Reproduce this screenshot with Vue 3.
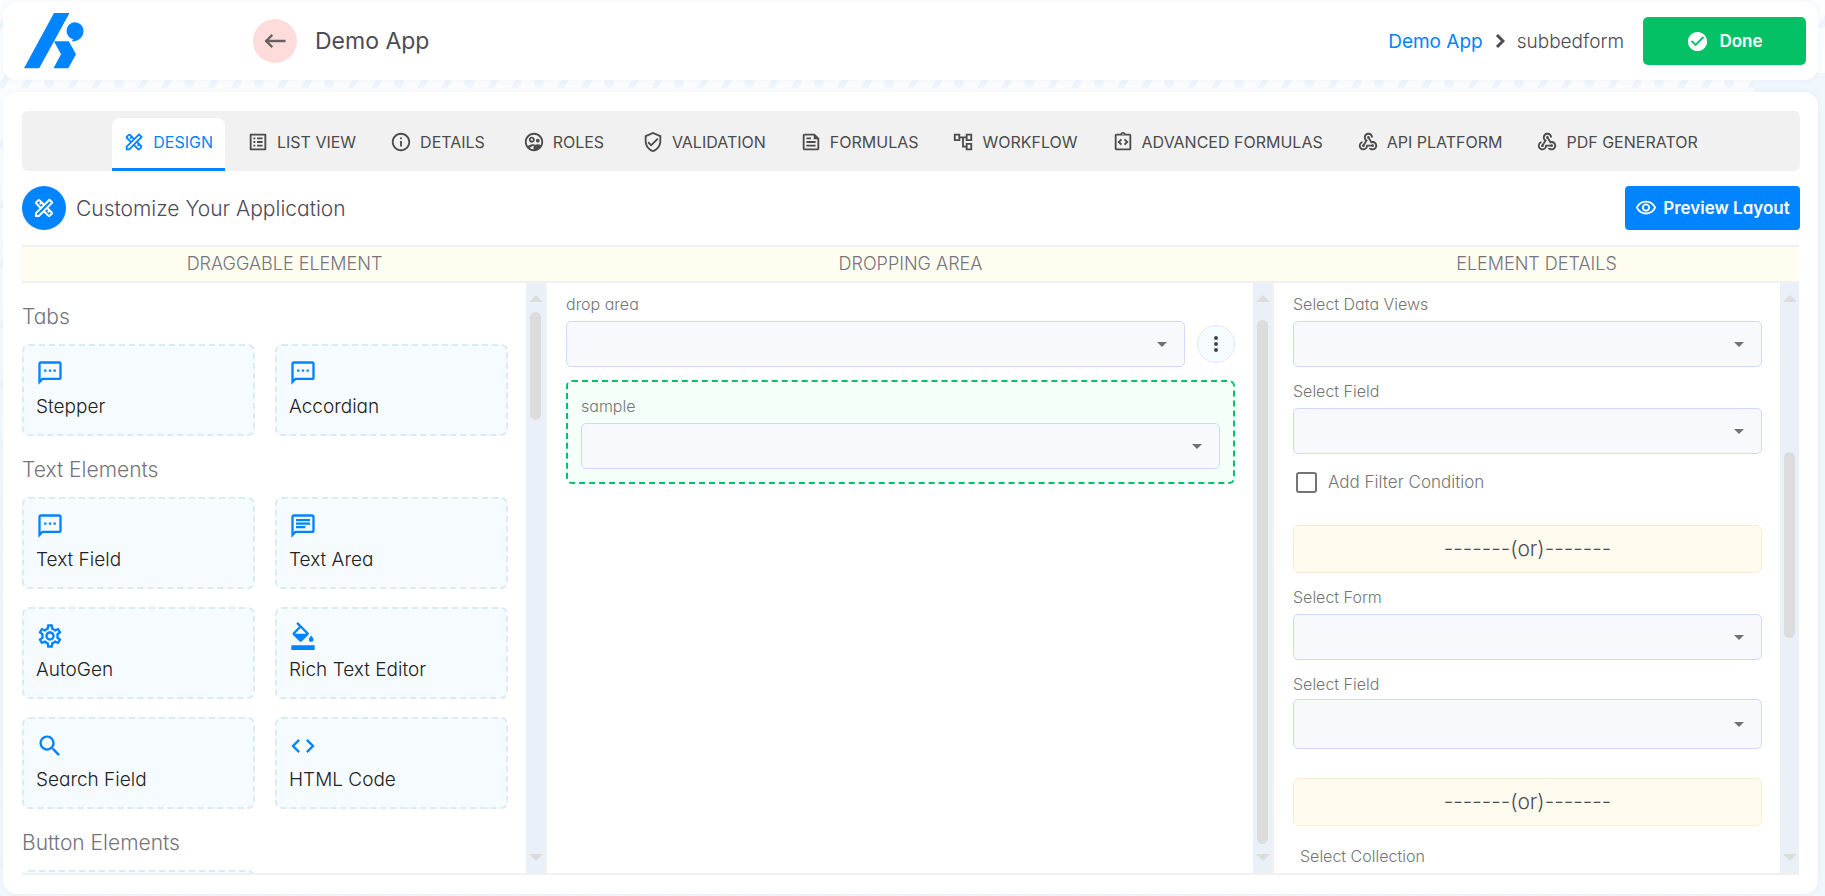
<script setup>
import { ref } from 'vue'

const icons = {
  design: 'M20.97 7.27c.39-.39.39-1.02 0-1.41l-2.83-2.83c-.39-.39-1.02-.39-1.41 0l-4.49 4.49-3.89-3.89c-.78-.78-2.05-.78-2.83 0l-1.9 1.9c-.78.78-.78 2.05 0 2.83l3.89 3.89L3 16.76V21h4.24l4.52-4.52 3.89 3.89c.95.95 2.23.6 2.83 0l1.9-1.9c.78-.78.78-2.05 0-2.83l-3.89-3.89 4.48-4.48zM5.04 6.94l1.89-1.9L8.2 6.31 7.02 7.5l1.41 1.41 1.19-1.19 1.2 1.2-1.9 1.9-3.88-3.88zm11.23 7.44l-1.19 1.19 1.41 1.41 1.19-1.19 1.27 1.27-1.9 1.9-3.89-3.89 1.9-1.9 1.21 1.21zM6.41 19H5v-1.41l9.61-9.61 1.3 1.3.11.11L6.41 19zm9.61-9.61l-1.41-1.41 2.83-2.83 1.41 1.41-2.83 2.83z',
  list: 'M19 5v14H5V5h14m1.1-2H3.9c-.5 0-.9.4-.9.9v16.2c0 .4.4.9.9.9h16.2c.4 0 .9-.5.9-.9V3.9c0-.5-.5-.9-.9-.9zM11 7h6v2h-6V7zm0 4h6v2h-6v-2zm0 4h6v2h-6zM7 7h2v2H7zm0 4h2v2H7zm0 4h2v2H7z',
  info: 'M11 7h2v2h-2zm0 4h2v6h-2zm1-9C6.48 2 2 6.48 2 12s4.48 10 10 10 10-4.48 10-10S17.52 2 12 2zm0 18c-4.41 0-8-3.59-8-8s3.59-8 8-8 8 3.59 8 8-3.59 8-8 8z',
  roles: 'M12 2C6.48 2 2 6.48 2 12s4.48 10 10 10 10-4.48 10-10S17.52 2 12 2zM5.3 16.3C4.500 15 4 13.600 4 12c0-4.420 3.580-8 8-8s8 3.580 8 8c0 1.200-.270 2.340-.750 3.370-1-.590-2.360-.870-3.240-.870-1.520 0-4.500.810-4.500 2.700v2.780c-1.500-.100-2.900-.600-4.100-1.500.600-1.200 2.300-1.900 4.100-2.200.300-.600 1-1.300 1.700-1.700-.700-.080-1.300-.150-2-.150-1.700 0-4.200.500-5.910 1.870zM9.610 12.750c1.790 0 3.250-1.460 3.250-3.250s-1.460-3.250-3.250-3.250S6.360 7.710 6.360 9.500s1.460 3.250 3.250 3.250zm0-4.500c.690 0 1.250.560 1.250 1.250s-.560 1.250-1.250 1.250-1.250-.560-1.250-1.250.560-1.250 1.250-1.250zM16.110 12.500c1.110 0 2-.890 2-2s-.890-2-2-2c-1.110 0-2.010.890-2 2 0 1.110.890 2 2 2z',
  shield: 'M12 1L3 5v6c0 5.55 3.84 10.74 9 12 5.16-1.26 9-6.45 9-12V5l-9-4zm7 10c0 4.52-2.98 8.69-7 9.93-4.02-1.24-7-5.41-7-9.93V6.3l7-3.11 7 3.11V11zm-11.59.59L6 13l4 4 8-8-1.41-1.42L10 14.17z',
  feed: 'M16 3H5c-1.1 0-2 .9-2 2v14c0 1.1.9 2 2 2h14c1.1 0 2-.9 2-2V8l-5-5zm3 16H5V5h10v4h4v10zM7 17h10v-2H7v2zm5-10H7v2h5V7zm-5 6h10v-2H7v2z',
  tree: 'M22 11V3h-7v3H9V3H2v8h7V8h2v10h4v3h7v-8h-7v3h-2V8h2v3h7zM7 9H4V5h3v4zm10 6h3v4h-3v-4zm0-10h3v4h-3V5z',
  clip: 'M11 14.17 8.83 12 11 9.83 9.59 8.41 6 12l3.59 3.59zM14.41 15.59 18 12l-3.59-3.59L13 9.83 15.17 12 13 14.17zM19 3h-4.18C14.4 1.84 13.3 1 12 1s-2.4.84-2.82 2H5c-1.1 0-2 .9-2 2v14c0 1.1.9 2 2 2h14c1.1 0 2-.9 2-2V5c0-1.1-.9-2-2-2zm-7-.25c.41 0 .75.34.75.75s-.34.75-.75.75-.75-.34-.75-.75.34-.75.75-.75zM19 19H5V5h14v14z',
  hook: 'M10 15h5.88c.27-.31.67-.5 1.12-.5.83 0 1.5.67 1.5 1.5s-.67 1.5-1.5 1.5c-.44 0-.84-.19-1.12-.5H11.9c-.46 2.28-2.48 4-4.9 4-2.76 0-5-2.24-5-5 0-2.42 1.72-4.44 4-4.9v2.07c-1.16.41-2 1.53-2 2.83 0 1.65 1.35 3 3 3s3-1.35 3-3v-1zm2.5-11c1.65 0 3 1.35 3 3h2c0-2.76-2.24-5-5-5s-5 2.24-5 5c0 1.43.6 2.71 1.55 3.62l-2.35 3.9c-.68.14-1.2.75-1.2 1.48 0 .83.67 1.5 1.5 1.5s1.5-.67 1.5-1.5c0-.16-.02-.31-.07-.45l3.38-5.63C10.49 9.61 9.5 8.42 9.5 7c0-1.65 1.35-3 3-3zm4.5 9c-.64 0-1.23.2-1.72.54l-3.05-5.07C11.53 8.35 11 7.74 11 7c0-.83.67-1.5 1.5-1.5S14 6.17 14 7c0 .15-.02.29-.06.43l2.19 3.65c.28-.05.57-.08.87-.08 2.76 0 5 2.24 5 5s-2.24 5-5 5c-1.85 0-3.47-1.01-4.33-2.5h2.67c.48.32 1.05.5 1.66.5 1.65 0 3-1.35 3-3s-1.35-3-3-3z',
  sms: 'M20 2H4c-1.1 0-2 .9-2 2v18l4-4h14c1.1 0 2-.9 2-2V4c0-1.1-.9-2-2-2zm0 14H5.170L4 17.170V4h16v12zM7 9h2v2H7zm4 0h2v2h-2zm4 0h2v2h-2z',
  chat: 'M4 4h16v12H5.17L4 17.17V4m0-2c-1.1 0-1.99.9-1.99 2L2 22l4-4h14c1.1 0 2-.9 2-2V4c0-1.1-.9-2-2-2H4zm2 10h8v2H6v-2zm0-3h12v2H6V9zm0-3h12v2H6V6z',
  gear: 'M19.43 12.98c.04-.32.07-.64.07-.98 0-.34-.03-.66-.07-.98l2.11-1.65c.19-.15.24-.42.12-.64l-2-3.46c-.09-.16-.26-.25-.44-.25-.06 0-.12.01-.17.03l-2.49 1c-.52-.4-1.08-.73-1.69-.98l-.38-2.65C14.46 2.18 14.25 2 14 2h-4c-.25 0-.46.18-.49.42l-.38 2.65c-.61.25-1.17.59-1.69.98l-2.49-1c-.06-.02-.12-.03-.18-.03-.17 0-.34.09-.43.25l-2 3.46c-.13.22-.07.49.12.64l2.11 1.65c-.04.32-.07.65-.07.98 0 .33.03.66.07.98l-2.11 1.65c-.19.15-.24.42-.12.64l2 3.46c.09.16.26.25.44.25.06 0 .12-.01.17-.03l2.49-1c.52.4 1.08.73 1.69.98l.38 2.65c.03.24.24.42.49.42h4c.25 0 .46-.18.49-.42l.38-2.65c.61-.25 1.17-.59 1.69-.98l2.49 1c.06.02.12.03.18.03.17 0 .34-.09.43-.25l2-3.46c.12-.22.07-.49-.12-.64l-2.11-1.65zm-1.98-1.71c.04.31.05.52.05.73 0 .21-.02.43-.05.73l-.14 1.13.89.7 1.08.84-.7 1.21-1.27-.51-1.04-.42-.9.68c-.43.32-.84.56-1.25.73l-1.06.43-.16 1.13-.2 1.35h-1.4l-.19-1.35-.16-1.13-1.06-.43c-.43-.18-.83-.41-1.23-.71l-.91-.7-1.06.43-1.27.51-.7-1.21 1.08-.84.89-.7-.14-1.13c-.03-.31-.05-.54-.05-.74s.02-.43.05-.73l.14-1.13-.89-.7-1.08-.84.7-1.21 1.27.51 1.04.42.9-.68c.43-.32.84-.56 1.25-.73l1.06-.43.16-1.13.2-1.35h1.39l.19 1.35.16 1.13 1.06.43c.43.18.83.41 1.23.71l.91.7 1.06-.43 1.27-.51.7 1.21-1.07.85-.89.7.14 1.13zM12 8c-2.21 0-4 1.79-4 4s1.79 4 4 4 4-1.79 4-4-1.79-4-4-4zm0 6c-1.1 0-2-.9-2-2s.9-2 2-2 2 .9 2 2-.9 2-2 2z',
  fill: 'M16.56 8.94L7.62 0 6.21 1.41l2.38 2.38-5.15 5.15c-.59.59-.59 1.54 0 2.12l5.5 5.5c.29.29.68.44 1.06.44s.77-.15 1.06-.44l5.5-5.5c.59-.58.59-1.53 0-2.12zM5.21 10L10 5.21 14.79 10H5.21zM19 11.5s-2 2.17-2 3.5c0 1.1.9 2 2 2s2-.9 2-2c0-1.33-2-3.5-2-3.5zM2 20h20v4H2v-4z',
  search: 'M15.5 14h-.79l-.28-.27C15.41 12.59 16 11.11 16 9.5 16 5.91 13.09 3 9.5 3S3 5.91 3 9.5 5.91 16 9.5 16c1.61 0 3.09-.59 4.23-1.57l.27.28v.79l5 4.99L20.49 19l-4.99-5zm-6 0C7.01 14 5 11.99 5 9.5S7.01 5 9.5 5 14 7.01 14 9.5 11.99 14 9.5 14z',
  code: 'M9.4 16.6L4.8 12l4.6-4.6L8 6l-6 6 6 6 1.4-1.4zm5.2 0l4.6-4.6-4.6-4.6L16 6l6 6-6 6-1.4-1.4z',
}

const active = ref('DESIGN')
const tabs = [
  { label: 'DESIGN', icon: 'design' },
  { label: 'LIST VIEW', icon: 'list' },
  { label: 'DETAILS', icon: 'info' },
  { label: 'ROLES', icon: 'roles' },
  { label: 'VALIDATION', icon: 'shield' },
  { label: 'FORMULAS', icon: 'feed' },
  { label: 'WORKFLOW', icon: 'tree' },
  { label: 'ADVANCED FORMULAS', icon: 'clip' },
  { label: 'API PLATFORM', icon: 'hook' },
  { label: 'PDF GENERATOR', icon: 'hook' },
]

const groups = [
  { title: 'Tabs', items: [{ label: 'Stepper', icon: 'sms' }, { label: 'Accordian', icon: 'sms' }] },
  {
    title: 'Text Elements',
    items: [
      { label: 'Text Field', icon: 'sms' },
      { label: 'Text Area', icon: 'chat' },
      { label: 'AutoGen', icon: 'gear' },
      { label: 'Rich Text Editor', icon: 'fill' },
      { label: 'Search Field', icon: 'search' },
      { label: 'HTML Code', icon: 'code' },
    ],
  },
  { title: 'Button Elements', items: [{ label: '', icon: 'code' }] },
]

const thumbs = {
  left: { top: '1.8%', height: '19.6%' },
  mid: { top: '3.3%', height: '94.9%' },
  right: { top: '27.2%', height: '33.7%' },
}
const filter = ref(false)
</script>

<template>
  <div class="page">
    <svg class="backdrop" aria-hidden="true">
      <defs>
        <pattern id="marks" width="70" height="60" patternUnits="userSpaceOnUse" y="30">
          <circle cx="49" cy="53" r="5" />
          <path d="M8 40h7L4 58H-3zM78 40h7L74 58H67z" />
          <path d="M21 44h7l4 7-4 7h-7l4-7z" />
          <circle cx="14" cy="23" r="5" />
          <path d="M43 10h7L39 28H32z" />
          <path d="M56 14h7l4 7-4 7h-7l4-7z" />
        </pattern>
      </defs>
      <rect width="100%" height="100%" fill="url(#marks)" />
    </svg>
    <div class="backtint"></div>

    <header class="topbar">
      <a href="#" class="logo" aria-label="Home">
        <svg width="60" height="56" viewBox="24 13 60 56">
          <path d="M54 13h15.500L39.200 68.300H24z" />
          <path d="M54 41.300h14.800L76 54.300 68.300 68.300H53.500L61 54.300z" />
          <path d="M75 22.300a8.600 8.600 0 0 1 8.500 8.600c0 6-5 10.500-11.800 10.600l1.600-2.200A8.600 8.600 0 0 1 75 22.300z" />
        </svg>
      </a>
      <button class="back" aria-label="Back">
        <svg width="28" height="28" viewBox="0 0 24 24"><path d="M21 11H6.830l3.580-3.590L9 6l-6 6 6 6 1.410-1.410L6.830 13H21z" /></svg>
      </button>
      <h1>Demo App</h1>
      <nav class="crumbs" aria-label="Breadcrumb">
        <a href="#">Demo App</a>
        <svg width="10" height="16" viewBox="0 0 10 16"><path d="M2 2l6 6-6 6" /></svg>
        <span>subbedform</span>
      </nav>
      <button class="done">
        <svg width="23" height="23" viewBox="0 0 24 24"><path d="M12 2C6.480 2 2 6.480 2 12s4.480 10 10 10 10-4.480 10-10S17.520 2 12 2zm-2 15l-5-5 1.410-1.410L10 14.170l7.590-7.590L19 8l-9 9z" /></svg>
        Done
      </button>
    </header>

    <main class="panel">
      <nav class="tabs" aria-label="Sections">
        <button v-for="t in tabs" :key="t.label" class="tab" :class="{ on: t.label === active }" @click="active = t.label">
          <svg width="22" height="22" viewBox="0 0 24 24"><path :d="icons[t.icon]" /></svg>
          <span>{{ t.label }}</span>
        </button>
      </nav>

      <div class="subhead">
        <span class="badge"><svg width="24" height="24" viewBox="0 0 24 24"><path :d="icons.design" /></svg></span>
        <h2>Customize Your Application</h2>
        <button class="preview">
          <svg width="22" height="22" viewBox="0 0 24 24"><path d="M12 6c3.790 0 7.170 2.130 8.820 5.500C19.170 14.870 15.790 17 12 17s-7.170-2.130-8.820-5.500C4.830 8.130 8.210 6 12 6m0-2C7 4 2.730 7.110 1 11.500 2.730 15.890 7 19 12 19s9.270-3.110 11-7.500C21.270 7.110 17 4 12 4zm0 5c1.380 0 2.500 1.120 2.500 2.500S13.380 14 12 14s-2.500-1.120-2.500-2.500S10.620 9 12 9m0-2c-2.480 0-4.500 2.020-4.500 4.500S9.520 16 12 16s4.500-2.020 4.500-4.500S14.480 7 12 7z" /></svg>
          Preview Layout
        </button>
      </div>

      <div class="heads cols">
        <span>DRAGGABLE ELEMENT</span>
        <span>DROPPING AREA</span>
        <span>ELEMENT DETAILS</span>
      </div>

      <div class="body cols">
        <section class="col">
          <div class="pane palette">
            <template v-for="g in groups" :key="g.title">
              <h3>{{ g.title }}</h3>
              <div class="cards">
                <div v-for="c in g.items" :key="c.label" class="card" draggable="true">
                  <svg width="28" height="28" viewBox="0 0 24 24"><path :d="icons[c.icon]" /></svg>
                  <span>{{ c.label }}</span>
                </div>
              </div>
            </template>
          </div>
          <div class="track">
            <i class="up"></i>
            <div class="lane"><div class="thumb" :style="thumbs.left"></div></div>
            <i class="down"></i>
          </div>
        </section>

        <section class="col">
          <div class="pane form">
            <label for="drop">drop area</label>
            <div class="line">
              <div class="pick"><select id="drop"></select><i></i></div>
              <button class="more" aria-label="More options"><b></b><b></b><b></b></button>
            </div>
            <div class="dropzone">
              <label for="sample">sample</label>
              <div class="pick"><select id="sample"></select><i></i></div>
            </div>
          </div>
          <div class="track">
            <i class="up"></i>
            <div class="lane"><div class="thumb" :style="thumbs.mid"></div></div>
            <i class="down"></i>
          </div>
        </section>

        <section class="col">
          <div class="pane form">
            <label for="views">Select Data Views</label>
            <div class="pick"><select id="views"></select><i></i></div>
            <label for="field1" class="next">Select Field</label>
            <div class="pick"><select id="field1"></select><i></i></div>
            <div class="check">
              <input id="filter" v-model="filter" type="checkbox" />
              <label for="filter">Add Filter Condition</label>
            </div>
            <div class="or">-------(or)-------</div>
            <label for="form" class="next">Select Form</label>
            <div class="pick"><select id="form"></select><i></i></div>
            <label for="field2" class="next tight">Select Field</label>
            <div class="pick tall"><select id="field2"></select><i></i></div>
            <div class="or">-------(or)-------</div>
            <label for="coll" class="collection">Select Collection</label>
            <div class="pick"><select id="coll"></select><i></i></div>
          </div>
          <div class="track last">
            <i class="up"></i>
            <div class="lane"><div class="thumb" :style="thumbs.right"></div></div>
            <i class="down"></i>
          </div>
        </section>
      </div>
    </main>
  </div>
</template>

<style>
html,
body {
  margin: 0;
  height: 100%;
}
</style>

<style scoped>
* {
  box-sizing: border-box;
}
.page {
  position: relative;
  display: flex;
  flex-direction: column;
  gap: 12px;
  height: 100vh;
  padding: 2px 7px 2px 3px;
  overflow: hidden;
  background: linear-gradient(180deg, #fcfdfe 0%, #fafcfe 20%, #eff6fc 60%, #f1f7fc 100%);
  color: #4d4b56;
  font-family: Inter, 'Noto Sans', sans-serif;
  font-feature-settings: 'cv11';
}
.backdrop {
  position: absolute;
  inset: 0;
  width: 100%;
  height: 100%;
  fill: #eef5fc;
}
.backtint {
  position: absolute;
  top: 73px;
  right: 0;
  bottom: 0;
  width: 71px;
  background: #f0f7fd;
}
h1,
h2,
h3 {
  margin: 0;
  font-weight: 300;
}
button {
  border: 0;
  padding: 0;
  font: inherit;
  cursor: pointer;
}
svg {
  display: block;
  flex: none;
}
.tab svg,
.badge svg,
.card svg,
.done svg,
.preview svg {
  fill: currentColor;
}

.topbar,
.panel {
  position: relative;
  background: #fff;
  border-radius: 14px;
  box-shadow: 0 0 6px rgba(60, 90, 130, 0.06);
}
.topbar {
  display: flex;
  align-items: center;
  height: 78px;
  flex: none;
  padding: 0 12px 0 21px;
}
.logo svg {
  fill: #0084ff;
}
.back {
  display: flex;
  align-items: center;
  justify-content: center;
  width: 44px;
  height: 44px;
  margin-left: 169px;
  border-radius: 50%;
  background: #fedcdb;
}
.back svg {
  fill: #6b5e60;
}
h1 {
  margin-left: 18px;
  font-size: 23px;
  font-weight: 400;
}
.crumbs {
  display: flex;
  align-items: center;
  gap: 12px;
  margin-left: auto;
  font-size: 19px;
  font-weight: 300;
}
.crumbs a {
  color: #0084ff;
  font-weight: 400;
  text-decoration: none;
}
.crumbs svg {
  fill: none;
  stroke: #4d4b56;
  stroke-width: 3;
}
.done {
  display: flex;
  align-items: center;
  justify-content: center;
  gap: 10px;
  width: 163px;
  height: 48px;
  margin-left: 19px;
  border-radius: 5px;
  background: #04c165;
  color: #fff;
  font-size: 17px;
  font-weight: 600;
}

.panel {
  display: flex;
  flex: 1;
  flex-direction: column;
  min-height: 0;
  padding: 19px 18px 19px 19px;
}
.tabs {
  display: flex;
  align-items: flex-end;
  justify-content: center;
  gap: 11px;
  height: 60px;
  flex: none;
  border-radius: 6px;
  background: #f1f1f1;
}
.tab {
  display: flex;
  align-items: center;
  justify-content: center;
  gap: 8px;
  min-width: 112px;
  height: 53px;
  padding: 0 12px 2px 11px;
  border-bottom: 3px solid transparent;
  border-radius: 8px 8px 0 0;
  background: transparent;
  color: #4c4c4c;
  font-size: 16px;
  font-weight: 400;
  white-space: nowrap;
}
.tab.on {
  background: #fff;
  border-bottom-color: #0084ff;
  color: #0084ff;
}
.subhead {
  display: flex;
  align-items: center;
  gap: 10px;
  height: 44px;
  margin: 15px 0;
  flex: none;
}
.badge {
  display: flex;
  align-items: center;
  justify-content: center;
  width: 44px;
  height: 44px;
  border-radius: 50%;
  background: #0084ff;
  color: #fff;
}
h2 {
  font-size: 21px;
}
.preview {
  display: flex;
  align-items: center;
  justify-content: center;
  gap: 6px;
  width: 175px;
  height: 44px;
  margin-left: auto;
  border-radius: 4px;
  background: #0084ff;
  color: #fff;
  font-size: 17px;
  font-weight: 600;
  white-space: nowrap;
}

.cols {
  display: grid;
  grid-template-columns: 525fr 727fr 525fr;
  margin-right: 1px;
}
.heads {
  flex: none;
  height: 38px;
  border-top: 2px solid #f1f1f3;
  border-bottom: 2px solid #f1f1f3;
  background: #fffdf0;
  color: #75737c;
  font-size: 18px;
  font-weight: 300;
  line-height: 34px;
  text-align: center;
}
.body {
  flex: 1;
  min-height: 0;
  border-bottom: 2px solid #f1f1f3;
}
.col {
  display: flex;
  min-width: 0;
  min-height: 0;
}
.pane {
  flex: 1;
  min-width: 0;
  overflow: hidden;
}
.palette {
  padding-right: 18px;
}
h3 {
  height: 61px;
  padding-top: 22px;
  color: #75737c;
  font-size: 21px;
  line-height: 24px;
}
.cards {
  display: grid;
  grid-template-columns: 1fr 1fr;
  gap: 18px 20px;
}
.card {
  height: 92px;
  padding: 13px 12px;
  border: 2px dashed #dcebf2;
  border-radius: 7px;
  background: #f6fbff;
  color: #0084ff;
}
.card span {
  display: block;
  margin-top: 8px;
  color: #222;
  font-size: 19px;
  font-weight: 300;
  line-height: 24px;
}

.track {
  display: flex;
  flex: none;
  flex-direction: column;
  align-items: center;
  width: 21px;
  padding: 12px 0;
  border-right: 2px solid #f1f1f1;
  background: #eaf0f8;
}
.track.last {
  width: 19px;
  border-right: 0;
}
.up,
.down {
  width: 0;
  height: 0;
  border: solid transparent;
}
.up {
  border-width: 0 7px 7px;
  border-bottom-color: #dcdcdc;
}
.down {
  border-width: 7px 7px 0;
  border-top-color: #dcdcdc;
}
.lane {
  position: relative;
  flex: 1;
  width: 11px;
}
.thumb {
  position: absolute;
  left: 0;
  width: 100%;
  border-radius: 6px;
  background: #dcdcdc;
}

.form {
  padding: 10px 18px 0 19px;
}
.form label {
  display: block;
  color: #757575;
  font-size: 16px;
  font-weight: 300;
  line-height: 22px;
  padding-bottom: 6px;
}
.line {
  display: flex;
  align-items: center;
  gap: 12px;
}
.pick {
  position: relative;
  flex: 1;
}
.pick select {
  display: block;
  width: 100%;
  height: 46px;
  border: 1px solid #ced9fb;
  border-radius: 5px;
  background: #f8f9fd;
  appearance: none;
}
.pick.tall select {
  height: 50px;
}
.pick i {
  position: absolute;
  top: 50%;
  right: 18px;
  margin-top: -2px;
  border: solid transparent;
  border-width: 5px 5px 0;
  border-top-color: #727272;
  pointer-events: none;
}
.more {
  display: flex;
  flex-direction: column;
  align-items: center;
  justify-content: center;
  gap: 2px;
  width: 38px;
  height: 38px;
  border: 1px solid #dcebf2;
  border-radius: 50%;
  background: #f6fbff;
}
.more b {
  width: 4px;
  height: 4px;
  border-radius: 50%;
  background: #444;
}
.dropzone {
  margin-top: 13px;
  padding: 13px;
  border: 2px dashed #04c165;
  border-radius: 6px;
  background: #f4fffa;
}
.form .next {
  padding-top: 13px;
}
.form .tight {
  padding-bottom: 4px;
}
.check {
  display: flex;
  align-items: center;
  gap: 11px;
  height: 28px;
  margin-top: 14px;
  padding-left: 3px;
}
.form .check label {
  padding: 0;
  font-size: 17px;
}
.check input {
  width: 21px;
  height: 21px;
  margin: 0;
  border: 2px solid #757575;
  border-radius: 3px;
  background: #fff;
  appearance: none;
}
.or {
  height: 48px;
  margin-top: 29px;
  border: 1px solid #fbecd0;
  border-radius: 6px;
  background: #fffbee;
  font-size: 21px;
  font-weight: 300;
  line-height: 46px;
  text-align: center;
}
.form .collection {
  padding-top: 19px;
  padding-bottom: 10px;
  padding-left: 7px;
}
</style>
